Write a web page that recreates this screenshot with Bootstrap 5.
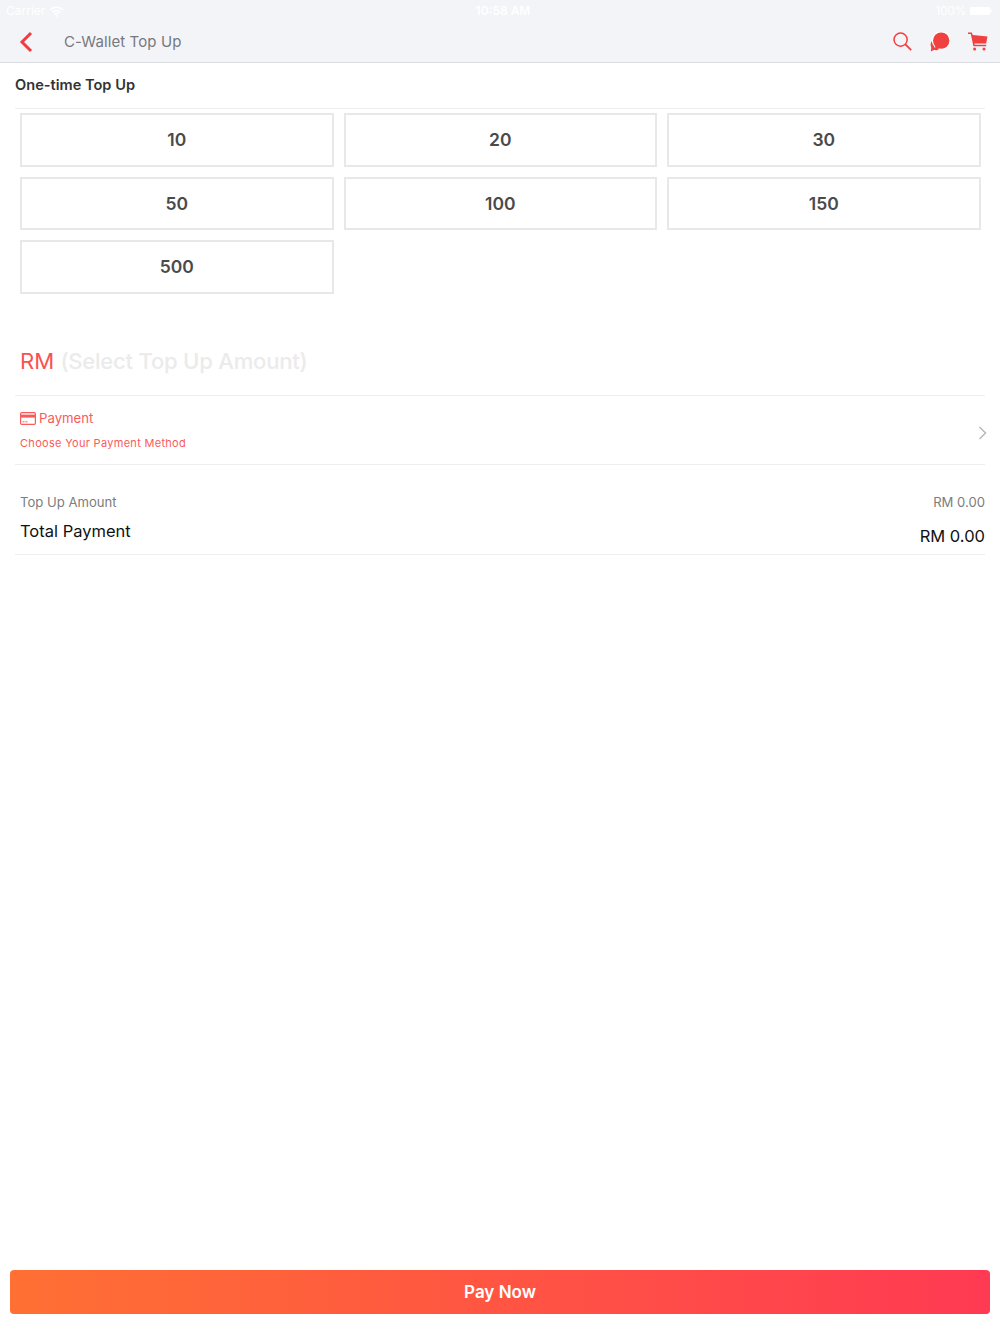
<!DOCTYPE html>
<html lang="en">
<head>
<meta charset="utf-8">
<title>C-Wallet Top Up</title>
<link href="https://cdn.jsdelivr.net/npm/bootstrap@5.3.0/dist/css/bootstrap.min.css" rel="stylesheet">
<style>
html,body{height:100%}
body{font-family:Inter,"Liberation Sans",sans-serif;background:#fff;color:#222}
.app-page{height:1334px;width:1000px;overflow:hidden}
.status-row{height:21px;padding:1px 8px 0 6px;color:#fff;font-size:12px;line-height:20px}
.status-row>*{flex:1 1 0}
.time-cell{padding-left:8px}
.batt-txt{font-size:11.5px}
.top-head{height:63px;background:#f3f4f8;border-bottom:1px solid #dcdde0}
.title-row{height:41px;padding:1px 12px 0 19px}
.page-title{font-size:15px;color:#77787d;margin-left:31px;letter-spacing:.1px}
.head-icons{gap:18px;margin-top:-1px}
.sect-title{font-size:14.6px;font-weight:600;color:#333;height:45.5px;line-height:44px;margin:0 15px;border-bottom:1px solid #eee}
.amt-grid{display:grid;grid-template-columns:repeat(3,313.5px);column-gap:10px;row-gap:10px;padding:4.5px 20px 0}
.amt-box{height:53.5px;border:2px solid #e8e8e8;background:#fff;border-radius:0;font-size:17.5px;font-weight:600;color:#4a4a4a;padding:1px 0 0}
.amt-line{margin:22px 15px 0;height:80px;padding:0 0 0 5px;border-bottom:1px solid #eee;font-size:22.1px;line-height:90px}
.rm-red{color:#fb5151}
.rm-hint{color:#ebebeb;font-weight:500;letter-spacing:-.25px}
.pay-row{margin:0 15px;height:69px;padding:0 0 0 5px;border-bottom:1px solid #eee;color:#fb5a5a}
.pay-name{font-size:13.2px;height:20px;margin-top:13px;gap:3px}
.pay-sub{font-size:11px;margin-top:6px;letter-spacing:.3px;line-height:16px}
.sum-box{margin:0 15px;height:90px;padding:28px 0 0 5px;border-bottom:1px solid #eee}
.sum-small{font-size:13.1px;color:#7d7d7d;line-height:18px}
.sum-big{font-size:16.5px;color:#111;line-height:24px;margin-top:8px}
.sum-big-val{padding-top:5px}
.pay-btn{position:absolute;left:10px;top:1270px;width:980px;height:44px;border:0;border-radius:4px;color:#fff;font-size:17px;font-weight:600;padding-top:8px;background:linear-gradient(90deg,#ff7033,#ff3a53)}
.chev{margin-right:-2px;margin-top:6px}
</style>
</head>
<body>
<div class="app-page position-relative">
  <header class="top-head">
    <div class="status-row d-flex align-items-center">
      <div class="d-flex align-items-center gap-1"><span>Carrier</span>
        <svg width="15" height="11" viewBox="0 0 15 11" aria-hidden="true"><path d="M1 4a9 9 0 0 1 13 0M3.3 6.2a5.8 5.8 0 0 1 8.4 0M5.4 8.2a2.8 2.8 0 0 1 4.2 0" fill="none" stroke="#fff" stroke-width="1.5"/><circle cx="7.5" cy="9.8" r="1.1" fill="#fff"/></svg>
      </div>
      <div class="text-center fw-semibold time-cell">10:58 AM</div>
      <div class="d-flex align-items-center justify-content-end gap-1"><span class="batt-txt">100%</span>
        <svg width="22" height="10" viewBox="0 0 22 10" aria-hidden="true"><rect x="0" y="1" width="20" height="8" rx="1.5" fill="#fff"/><rect x="20.5" y="3.5" width="1" height="3" fill="#fff"/></svg>
      </div>
    </div>
    <div class="title-row d-flex align-items-center">
      <svg width="14" height="22" viewBox="0 0 14 22" aria-hidden="true"><path d="M12 2 3 11l9 9" fill="none" stroke="#f23b3f" stroke-width="3"/></svg>
      <div class="page-title flex-grow-1">C-Wallet Top Up</div>
      <div class="head-icons d-flex align-items-center">
        <svg width="19" height="19" viewBox="0 0 19 19" aria-hidden="true"><circle cx="7.6" cy="7.6" r="6.6" fill="none" stroke="#f04040" stroke-width="1.5"/><path d="m12.4 12.4 5.8 5.8" stroke="#f04040" stroke-width="1.8"/></svg>
        <svg width="20" height="20" viewBox="0 0 20 20" aria-hidden="true"><circle cx="6.2" cy="12.6" r="5.6" fill="#f04040"/><path d="M1.6 14 .8 19.6l5-2.6z" fill="#f04040"/><circle cx="11.2" cy="8.6" r="9.4" fill="#fff"/><circle cx="11.2" cy="8.6" r="8.2" fill="#f04040"/><path d="M5.4 13.8 5 18l5-2z" fill="#f04040"/></svg>
        <svg width="20" height="19" viewBox="0 0 20 19" aria-hidden="true"><path d="M0 .6h3.8l.9 2.4 14.8 1.6-1.4 7H6.4l.3 1.2h11.5v1.4H5.4L2.8 2H0z" fill="#f04040"/><circle cx="6.6" cy="17" r="1.5" fill="#f04040"/><circle cx="16" cy="17" r="1.5" fill="#f04040"/></svg>
      </div>
    </div>
  </header>
  <main>
    <div class="sect-title">One-time Top Up</div>
    <div class="amt-grid">
      <button type="button" class="btn amt-box">10</button>
      <button type="button" class="btn amt-box">20</button>
      <button type="button" class="btn amt-box">30</button>
      <button type="button" class="btn amt-box">50</button>
      <button type="button" class="btn amt-box">100</button>
      <button type="button" class="btn amt-box">150</button>
      <button type="button" class="btn amt-box">500</button>
    </div>
    <div class="amt-line"><span class="rm-red">RM</span> <span class="rm-hint">(Select Top Up Amount)</span></div>
    <div class="pay-row d-flex justify-content-between align-items-center">
      <div class="align-self-start">
        <div class="pay-name d-flex align-items-center">
          <svg width="16" height="13" viewBox="0 0 16 13" aria-hidden="true"><rect x=".6" y=".6" width="14.8" height="11.8" rx="1.2" fill="none" stroke="#fb5a5a" stroke-width="1.2"/><rect x="1" y="2.6" width="14" height="3" fill="#fb5a5a"/><path d="M2.5 9.8h2M5.5 9.8h2" stroke="#fb5a5a"/></svg>
          <span>Payment</span>
        </div>
        <div class="pay-sub">Choose Your Payment Method</div>
      </div>
      <svg class="chev" width="9" height="14" viewBox="0 0 9 14" aria-hidden="true"><path d="m1.5 1 6 6-6 6" fill="none" stroke="#b9b9bb" stroke-width="1.5"/></svg>
    </div>
    <div class="sum-box">
      <div class="d-flex justify-content-between sum-small"><span>Top Up Amount</span><span>RM 0.00</span></div>
      <div class="d-flex justify-content-between sum-big"><span>Total Payment</span><span class="sum-big-val">RM 0.00</span></div>
    </div>
  </main>
  <button type="button" class="btn pay-btn">Pay Now</button>
</div>
<script src="https://cdn.jsdelivr.net/npm/bootstrap@5.3.0/dist/js/bootstrap.bundle.min.js"></script>
</body>
</html>
